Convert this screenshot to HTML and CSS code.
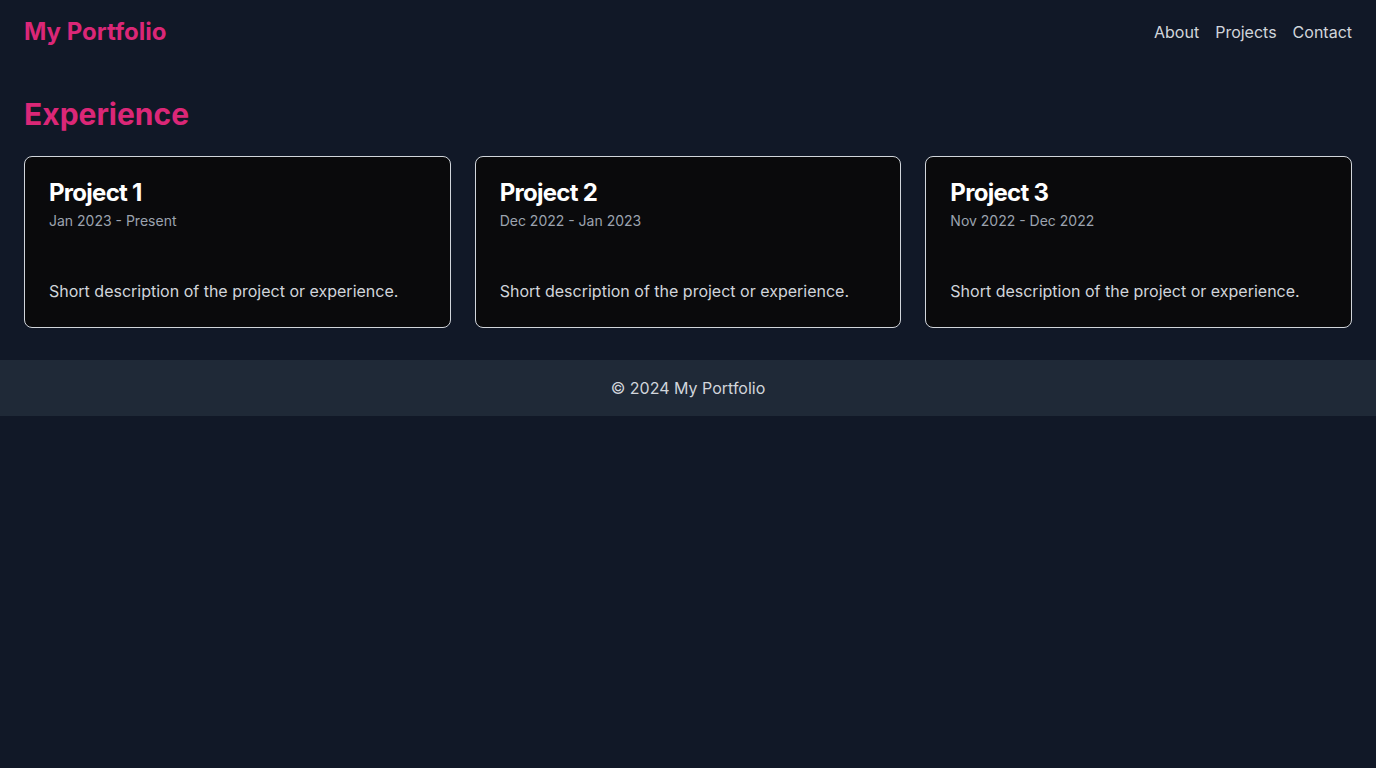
FILE: index.html
```html
<!DOCTYPE html>
<html lang="en">
<head>
<meta charset="utf-8">
<title>My Portfolio</title>
<link rel="stylesheet" href="styles.css">
</head>
<body>
<header class="site-header">
  <div class="logo">My Portfolio</div>
  <nav class="nav">
    <a href="#">About</a>
    <a href="#">Projects</a>
    <a href="#">Contact</a>
  </nav>
</header>
<main class="main">
  <h1 class="section-title">Experience</h1>
  <div class="cards">
    <article class="card">
      <h2 class="card-title">Project 1</h2>
      <p class="card-date">Jan 2023 - Present</p>
      <p class="card-desc">Short description of the project or experience.</p>
    </article>
    <article class="card">
      <h2 class="card-title">Project 2</h2>
      <p class="card-date">Dec 2022 - Jan 2023</p>
      <p class="card-desc">Short description of the project or experience.</p>
    </article>
    <article class="card">
      <h2 class="card-title">Project 3</h2>
      <p class="card-date">Nov 2022 - Dec 2022</p>
      <p class="card-desc">Short description of the project or experience.</p>
    </article>
  </div>
</main>
<footer class="footer">© 2024 My Portfolio</footer>
</body>
</html>
```
FILE: styles.css
```css
* { box-sizing: border-box; }
html, body {
  margin: 0;
  padding: 0;
  background: #111827;
  font-family: Inter, "Noto Sans", sans-serif;
  color: #d1d5db;
}
.site-header {
  display: flex;
  justify-content: space-between;
  align-items: center;
  padding: 16px 24px;
}
.logo {
  font-size: 24px;
  line-height: 32px;
  font-weight: 700;
  color: #db2777;
}
.nav {
  display: flex;
  gap: 16px;
}
.nav a {
  color: #d1d5db;
  text-decoration: none;
  font-size: 16px;
  line-height: 24px;
}
.main {
  padding: 32px 24px;
}
.section-title {
  margin: 0 0 24px;
  font-size: 30px;
  line-height: 36px;
  font-weight: 700;
  color: #db2777;
}
.cards {
  display: grid;
  grid-template-columns: repeat(3, 1fr);
  gap: 24px;
}
.card {
  background: #0a0a0c;
  border: 1px solid #d1d5db;
  border-radius: 8px;
  padding: 20px 24px 24px;
}
.card-title {
  margin: 0;
  font-size: 24px;
  line-height: 32px;
  font-weight: 700;
  letter-spacing: -0.03em;
  color: #ffffff;
}
.card-date {
  margin: 2px 0 0;
  font-size: 14px;
  line-height: 20px;
  color: #9ca3af;
}
.card-desc {
  margin: 48px 0 0;
  font-size: 16px;
  line-height: 24px;
  color: #d1d5db;
}
.footer {
  background: #1f2937;
  padding: 16px;
  text-align: center;
  font-size: 16px;
  line-height: 24px;
  color: #d1d5db;
}
```
